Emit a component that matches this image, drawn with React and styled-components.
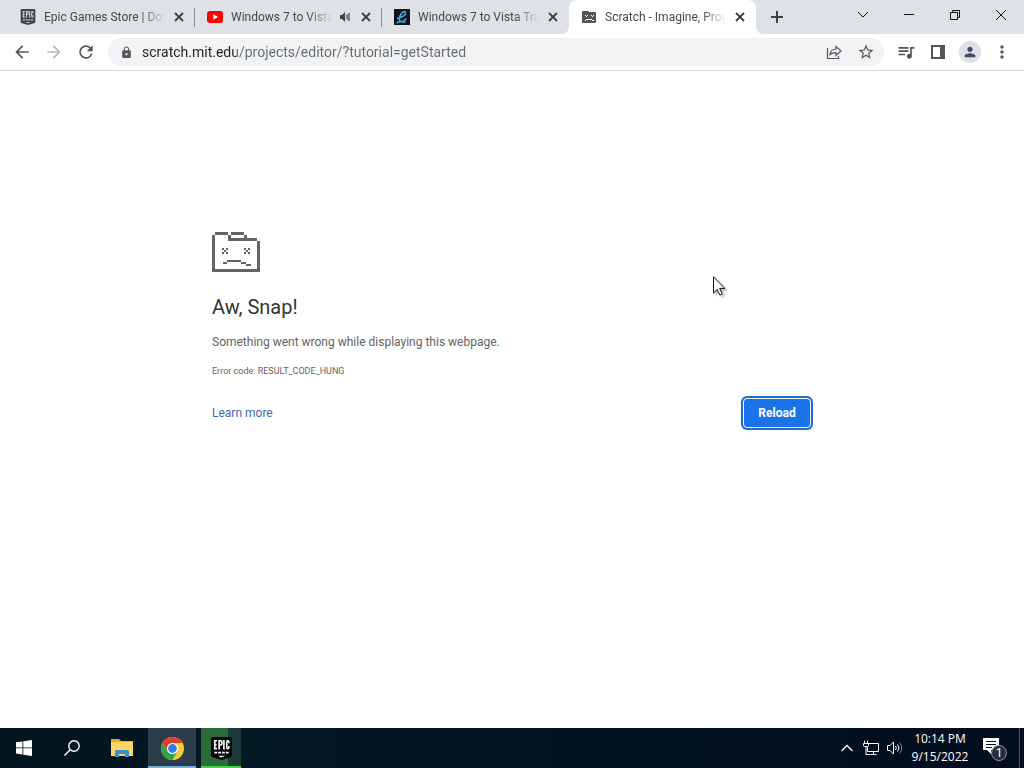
import React from "react";
import styled, { createGlobalStyle, css } from "styled-components";
import { MdArrowBack, MdArrowForward, MdRefresh, MdLock, MdStarOutline, MdQueueMusic, MdMoreVert, MdPerson } from "react-icons/md";

const GlobalStyle = createGlobalStyle`
  * { box-sizing: border-box; }
  body {
    margin: 0;
    background: #fff;
    font-family: Roboto, "Open Sans", sans-serif;
    font-size: 12px;
    line-height: 16px;
    color: #45494d;
  }
  button, input { font: inherit; color: inherit; border: 0; padding: 0; background: none; }
  svg { display: block; flex: none; }
`;

const Desktop = styled.div`
  min-height: 100vh;
  display: flex;
  flex-direction: column;
`;

const TabStrip = styled.header`
  display: flex;
  height: 34px;
  padding-left: 8px;
  background: #dee1e6;
`;

const TabList = styled.div`
  display: flex;
  flex: 0 1 748px;
  min-width: 0;
`;

const Tab = styled.div`
  position: relative;
  flex: 1 1 0;
  min-width: 0;
  display: flex;
  align-items: center;
  padding: 0 8px 0 12px;
  ${(p) =>
    p.$divider &&
    css`
      background: linear-gradient(#8e9196, #8e9196) right center / 1px 19px no-repeat;
    `}
  ${(p) =>
    p.$active &&
    css`
      background: #fff;
      border-radius: 8px 8px 0 0;
      &::before,
      &::after {
        content: "";
        position: absolute;
        bottom: 0;
        width: 8px;
        height: 8px;
      }
      &::before {
        right: 100%;
        background: radial-gradient(circle at 0 0, transparent 8px, #fff 8px);
      }
      &::after {
        left: 100%;
        background: radial-gradient(circle at 100% 0, transparent 8px, #fff 8px);
      }
    `}
`;

const TabTitle = styled.button`
  flex: 1;
  min-width: 0;
  display: flex;
  align-items: center;
  gap: 8px;
  text-align: left;
`;

const TabText = styled.span`
  flex: 1;
  min-width: 0;
  overflow: hidden;
  white-space: nowrap;
  mask-image: linear-gradient(to left, transparent, #000 24px);
`;

const TabClose = styled.button`
  display: grid;
  place-items: center;
  width: 16px;
  height: 16px;
  margin-left: 6px;
`;

const NewTab = styled.button`
  display: grid;
  place-items: center;
  width: 28px;
  height: 34px;
  margin-left: 7px;
`;

const WindowButtons = styled.div`
  display: flex;
  height: 29px;
  margin-left: auto;
`;

const WindowButton = styled.button`
  display: grid;
  place-items: center;
  width: 46px;
  color: #111;
`;

const Toolbar = styled.nav`
  display: flex;
  align-items: center;
  height: 37px;
  padding: 0 6px;
  border-bottom: 1px solid #d5d7da;
  color: #54585c;
`;

const ToolButton = styled.button`
  display: grid;
  place-items: center;
  flex: none;
  width: 32px;
  height: 28px;
  color: ${(p) => (p.$muted ? "#b8babd" : "#54585c")};
`;

const Omnibox = styled.form`
  flex: 1;
  display: flex;
  align-items: center;
  height: 28px;
  margin: 0 6px;
  padding: 0 2px 0 12px;
  border-radius: 14px;
  background: #f1f3f4;
`;

const Address = styled.input`
  flex: 1;
  min-width: 0;
  height: 20px;
  margin-left: 9px;
  font-size: 14px;
  outline: 0;
  color: transparent;
  caret-color: #202124;
  background: linear-gradient(to right, #202124 94px, #686c70 94px);
  background-clip: text;
`;

const Avatar = styled.span`
  display: grid;
  place-items: center;
  width: 22px;
  height: 22px;
  border-radius: 50%;
  background: #dce0e8;
  color: #414d63;
`;

const Page = styled.main`
  position: relative;
  flex: 1;
  padding: 161px 24px 40px;
`;

const ErrorPanel = styled.section`
  max-width: 600px;
  margin: 0 auto;
  color: #646464;
`;

const Title = styled.h1`
  margin: 21px 0 12px;
  font-size: 20px;
  font-weight: 400;
  line-height: 28px;
  color: #333;
`;

const Message = styled.p`
  margin: 0;
  line-height: 18px;
`;

const ErrorCode = styled.p`
  margin: 12px 0 0;
  font-size: 9px;
`;

const Actions = styled.div`
  display: flex;
  align-items: center;
  justify-content: space-between;
  margin-top: 19px;
`;

const HelpLink = styled.a`
  color: #3d68b8;
  text-decoration: none;
`;

const ReloadButton = styled.button`
  width: 68px;
  height: 30px;
  margin-right: 1px;
  border: 1px solid #fff;
  border-radius: 4px;
  background: #1a73e8;
  color: #fff;
  font-weight: 700;
  box-shadow: 0 0 0 2px #1a6fd4;
`;

const Pointer = styled.svg`
  position: absolute;
  left: 713px;
  top: 205px;
  filter: drop-shadow(2px 2px 1px rgba(0, 0, 0, 0.3));
`;

const Taskbar = styled.footer`
  display: flex;
  height: 40px;
  background: linear-gradient(to right, #02151f, #021822 25%, #02101f 75%, #020d1e);
  color: #fff;
`;

const TaskButton = styled.button`
  display: grid;
  place-items: center;
  width: ${(p) => p.$width || 48}px;
  margin-left: ${(p) => p.$gap || 0}px;
  background: ${(p) => p.$fill || "none"};
  box-shadow: inset 0 -2px ${(p) => p.$line || "transparent"};
`;

const Tray = styled.div`
  display: flex;
  align-items: center;
  margin-left: auto;
`;

const TrayButton = styled.button`
  display: grid;
  place-items: center;
  width: 24px;
  height: 40px;
`;

const Clock = styled.button`
  width: 66px;
  height: 40px;
  font-family: "Open Sans", sans-serif;
  font-size: 12px;
  line-height: 18px;
  text-align: center;
  white-space: nowrap;
`;

const Notifications = styled(TrayButton)`
  width: 46px;
`;

const ShowDesktop = styled.button`
  width: 5px;
  height: 40px;
  border-left: 1px solid #4a5663;
`;

const EpicLogo = ({ width, height, shield, ink }) => (
  <svg width={width} height={height} viewBox="0 0 22 24" aria-hidden="true">
    <path d="M2 0h18q2 0 2 2v17.5q0 1-1 1.400L11 24 1 20.900q-1-.4-1-1.400V2q0-2 2-2z" fill={shield} />
    <g fill="none" stroke={ink} strokeWidth="1.700">
      <path d="M6.300 3.900H3.900v8.200h2.400M3.900 8h2M8.500 13V3.900h1.700q1.100 0 1.100 1.200v2q0 1.200-1.100 1.200H8.500M13.500 3v10M18.700 6.500V5q0-1.100-1.100-1.100T16.500 5v6q0 1.100 1.100 1.100t1.100-1.100V9.500" />
      <path d="M3.500 16.300h15" strokeWidth="2" strokeDasharray="3 1" />
    </g>
    <path d="M7 19.500h8L11 21.300z" fill={ink} />
  </svg>
);

const YouTubeIcon = () => (
  <svg width="16" height="16" viewBox="0 0 16 16" aria-hidden="true">
    <rect y="2" width="16" height="12" rx="3" fill="#f00" />
    <path d="M6.300 5.300v5.400L11 8z" fill="#fff" />
  </svg>
);

const ChannelIcon = () => (
  <svg width="16" height="16" viewBox="0 0 16 16" aria-hidden="true">
    <path d="M0 0h16v16H0z" fill="#10141c" />
    <path d="M3 9.500C8 8.500 12 6 11.500 3.500 11 1.500 7.500 3 6 7c-1.500 4-.5 6 2 5.500 1.800-.3 3.200-1.500 4.500-3M2.500 14c3-1.500 6-1.500 9-.5" fill="none" stroke="#3fa9dc" strokeWidth="1.600" />
  </svg>
);

const SadTabIcon = () => (
  <svg width="16" height="16" viewBox="0 0 16 16" aria-hidden="true">
    <path d="M2 2h5l1 1h6q1 0 1 1v9q0 1-1 1H2q-1 0-1-1V3q0-1 1-1z" fill="#53565a" />
    <path d="M4 6h1v1H4zM6 6h1v1H6zM5 7h1v1H5zM10 6h1v1h-1zM12 6h1v1h-1zM11 7h1v1h-1zM5 10h6v1H5zM4 11h1v1H4zM11 11h2v1h-2z" fill="#fff" />
  </svg>
);

const SpeakerIcon = () => (
  <svg width="12" height="12" viewBox="0 0 12 12" aria-hidden="true">
    <path d="M0 4h2l3-3v10L2 8H0z" fill="#3c4043" />
    <path d="M7 3.500v5M9 2v8" stroke="#3c4043" strokeWidth="1.200" />
  </svg>
);

const CloseIcon = () => (
  <svg width="10" height="10" viewBox="0 0 10 10" aria-hidden="true">
    <path d="M1 1l8 8M9 1L1 9" stroke="#3c4043" strokeWidth="1.800" />
  </svg>
);

const SadFolder = () => (
  <svg width="48" height="40" viewBox="0 0 48 40" fill="#646464" shapeRendering="crispEdges" role="img" aria-label="Page crashed">
    <path d="M3 0h13v3H3zM19 0h13v3H19zM0 3h3v34h42V9h3v31H0zM16 3h3v3h13V3h3v3h10v3H16z" />
    <path d="M10 16h2v2h-2zM14 16h2v2h-2zM12 18h2v2h-2zM10 20h2v2h-2zM14 20h2v2h-2zM32 16h2v2h-2zM36 16h2v2h-2zM34 18h2v2h-2zM32 20h2v2h-2zM36 20h2v2h-2z" />
    <path d="M15 28h14v2H15zM11 30h4v2h-4zM29 30h5v2h-5zM34 32h5v2h-5z" />
  </svg>
);

const ChromeLogo = () => (
  <svg width="23" height="23" viewBox="0 0 24 24" aria-hidden="true">
    <circle cx="12" cy="12" r="12" fill="#fcc934" />
    <path d="M1.610 6L7 15l5-8.700H22.500A12 12 0 0 0 1.610 6z" fill="#e33b2e" />
    <path d="M1.610 6l5.200 9 5.200 3 5-3L12 24A12 12 0 0 1 1.610 6z" fill="#2ba24c" />
    <circle cx="12" cy="12" r="5.800" fill="#fff" />
    <circle cx="12" cy="12" r="4.600" fill="#2f7de9" />
  </svg>
);

const tabs = [
  { title: "Epic Games Store | Dow", icon: <EpicLogo width={16} height={16} shield="#3f4246" ink="#c9ccd0" />, divider: true },
  { title: "Windows 7 to Vista", icon: <YouTubeIcon />, divider: true, audio: true },
  { title: "Windows 7 to Vista Tra", icon: <ChannelIcon /> },
  { title: "Scratch - Imagine, Prog", icon: <SadTabIcon />, active: true },
];

export default function App() {
  return (
    <>
      <GlobalStyle />
      <Desktop>
        <TabStrip>
          <TabList>
            {tabs.map((t) => (
              <Tab key={t.title} $active={t.active} $divider={t.divider}>
                <TabTitle>
                  {t.icon}
                  <TabText>{t.title}</TabText>
                  {t.audio && <SpeakerIcon />}
                </TabTitle>
                <TabClose aria-label="Close tab">
                  <CloseIcon />
                </TabClose>
              </Tab>
            ))}
          </TabList>
          <NewTab aria-label="New tab">
            <svg width="12" height="12" viewBox="0 0 12 12">
              <path d="M6 0v12M0 6h12" stroke="#3c4043" strokeWidth="2" />
            </svg>
          </NewTab>
          <WindowButtons>
            <WindowButton aria-label="Search tabs">
              <svg width="12" height="12" viewBox="0 0 12 12" fill="none" stroke="currentColor">
                <path d="M1 3l5 5 5-5" />
              </svg>
            </WindowButton>
            <WindowButton aria-label="Minimize">
              <svg width="10" height="10" viewBox="0 0 10 10" stroke="currentColor">
                <path d="M0 4.500h10" />
              </svg>
            </WindowButton>
            <WindowButton aria-label="Restore">
              <svg width="10" height="10" viewBox="0 0 10 10" fill="none" stroke="currentColor">
                <path d="M.5 2.500h7v7h-7zM2.500 2.500v-2h7v7h-2" />
              </svg>
            </WindowButton>
            <WindowButton aria-label="Close">
              <svg width="10" height="10" viewBox="0 0 10 10" stroke="currentColor">
                <path d="M0 0l10 10M10 0L0 10" />
              </svg>
            </WindowButton>
          </WindowButtons>
        </TabStrip>
        <Toolbar>
          <ToolButton aria-label="Back"><MdArrowBack size={20} /></ToolButton>
          <ToolButton aria-label="Forward" $muted><MdArrowForward size={20} /></ToolButton>
          <ToolButton aria-label="Reload page"><MdRefresh size={20} /></ToolButton>
          <Omnibox>
            <MdLock size={13} />
            <Address aria-label="Address" defaultValue="scratch.mit.edu/projects/editor/?tutorial=getStarted" />
            <ToolButton type="button" aria-label="Share">
              <svg width="16" height="16" viewBox="0 0 16 16" fill="none" stroke="currentColor" strokeWidth="1.200">
                <path d="M1.500 4v10.500h11V12M4 10.500c.5-4 2.500-5.500 6-5.500V2.500L15 7l-5 4.500V8.700c-3 0-4.500.3-6 1.800z" />
              </svg>
            </ToolButton>
            <ToolButton type="button" aria-label="Bookmark"><MdStarOutline size={18} /></ToolButton>
          </Omnibox>
          <ToolButton aria-label="Media controls"><MdQueueMusic size={20} /></ToolButton>
          <ToolButton aria-label="Side panel">
            <svg width="14" height="14" viewBox="0 0 14 14">
              <path d="M1 1h12v12H1z" fill="none" stroke="currentColor" strokeWidth="2" />
              <path d="M9 1h4v12H9z" fill="currentColor" />
            </svg>
          </ToolButton>
          <ToolButton aria-label="Profile"><Avatar><MdPerson size={16} /></Avatar></ToolButton>
          <ToolButton aria-label="Menu"><MdMoreVert size={20} /></ToolButton>
        </Toolbar>
        <Page>
          <ErrorPanel>
            <SadFolder />
            <Title>Aw, Snap!</Title>
            <Message>Something went wrong while displaying this webpage.</Message>
            <ErrorCode>Error code: RESULT_CODE_HUNG</ErrorCode>
            <Actions>
              <HelpLink href="#help">Learn more</HelpLink>
              <ReloadButton>Reload</ReloadButton>
            </Actions>
          </ErrorPanel>
          <Pointer width="13" height="20" viewBox="0 0 13 20" aria-hidden="true">
            <path d="M.5.800v16.200l3.700-3.600 2.600 5.600 2.400-1.100-2.600-5.500h5.200z" fill="#fff" stroke="#111" />
          </Pointer>
        </Page>
        <Taskbar>
          <TaskButton aria-label="Start">
            <svg width="16" height="16" viewBox="0 0 16 16" fill="#fff">
              <path d="M0 2.300l6.500-.9v6.100H0zM7.300 1.300L16 0v7.500H7.300zM0 8.300h6.500v6.200L0 13.600zM7.300 8.300H16V16l-8.700-1.300z" />
            </svg>
          </TaskButton>
          <TaskButton aria-label="Search">
            <svg width="16" height="16" viewBox="0 0 16 16" fill="none" stroke="#fff" strokeWidth="1.400">
              <circle cx="10" cy="6" r="5.200" />
              <path d="M6.200 9.800L.5 15.500" />
            </svg>
          </TaskButton>
          <TaskButton aria-label="File Explorer" $gap={2}>
            <svg width="22" height="18" viewBox="0 0 22 18">
              <path d="M0 0h8l2 2h12v4H0z" fill="#e5a92c" />
              <path d="M0 3h22v14H0z" fill="#fbd565" />
              <path d="M4 18v-5.500q0-1.500 1.500-1.500h11q1.500 0 1.500 1.500V18h-4v-3H8v3z" fill="#3b91cb" />
            </svg>
          </TaskButton>
          <TaskButton aria-label="Google Chrome" $gap={2} $fill="#2a3d48" $line="#76aede">
            <ChromeLogo />
          </TaskButton>
          <TaskButton aria-label="Epic Games" $gap={5} $width={40} $fill="linear-gradient(to right, #2b6b3a 27px, #1c3b38 27px)" $line="#3fd540">
            <EpicLogo width={21} height={23} shield="#050505" ink="#fff" />
          </TaskButton>
          <Tray>
            <TrayButton aria-label="Show hidden icons">
              <svg width="12" height="8" viewBox="0 0 12 8" fill="none" stroke="#fff" strokeWidth="1.300">
                <path d="M.5 7L6 1.500 11.500 7" />
              </svg>
            </TrayButton>
            <TrayButton aria-label="Network">
              <svg width="17" height="16" viewBox="0 0 17 16" fill="none" stroke="#fff">
                <path d="M5.500 3.500h10v8h-11v-4M1.500.500v3M4.500.500v3M.500 3.500h5v2q0 1-1 1h-3q-1 0-1-1zM3 6.500v8h4M10.500 11.500v3M7.500 14.500h6" />
              </svg>
            </TrayButton>
            <TrayButton aria-label="Volume">
              <svg width="16" height="14" viewBox="0 0 16 14" fill="none" stroke="#fff">
                <path d="M.5 4.500H3L6.500 1v12L3 9.500H.500zM8.500 5q1.500 2 0 4M10.500 3.500q3 3.500 0 7" />
                <path d="M12.500 1.500q4.500 5.500 0 11" stroke="#7c8794" />
              </svg>
            </TrayButton>
            <Clock>
              10:14 PM
              <br />
              9/15/2022
            </Clock>
            <Notifications aria-label="1 new notification">
              <svg width="26" height="26" viewBox="0 0 26 26">
                <path d="M0 3h16v12H8v4l-4-4H0z" fill="#fff" />
                <path d="M3 6.500h10M3 9.500h10M3 12.500h6" stroke="#02101f" />
                <circle cx="16" cy="18" r="7.500" fill="#26303c" stroke="#8b949d" />
                <text x="16" y="22" fill="#fff" fontSize="12" textAnchor="middle">1</text>
              </svg>
            </Notifications>
            <ShowDesktop aria-label="Show desktop" />
          </Tray>
        </Taskbar>
      </Desktop>
    </>
  );
}
